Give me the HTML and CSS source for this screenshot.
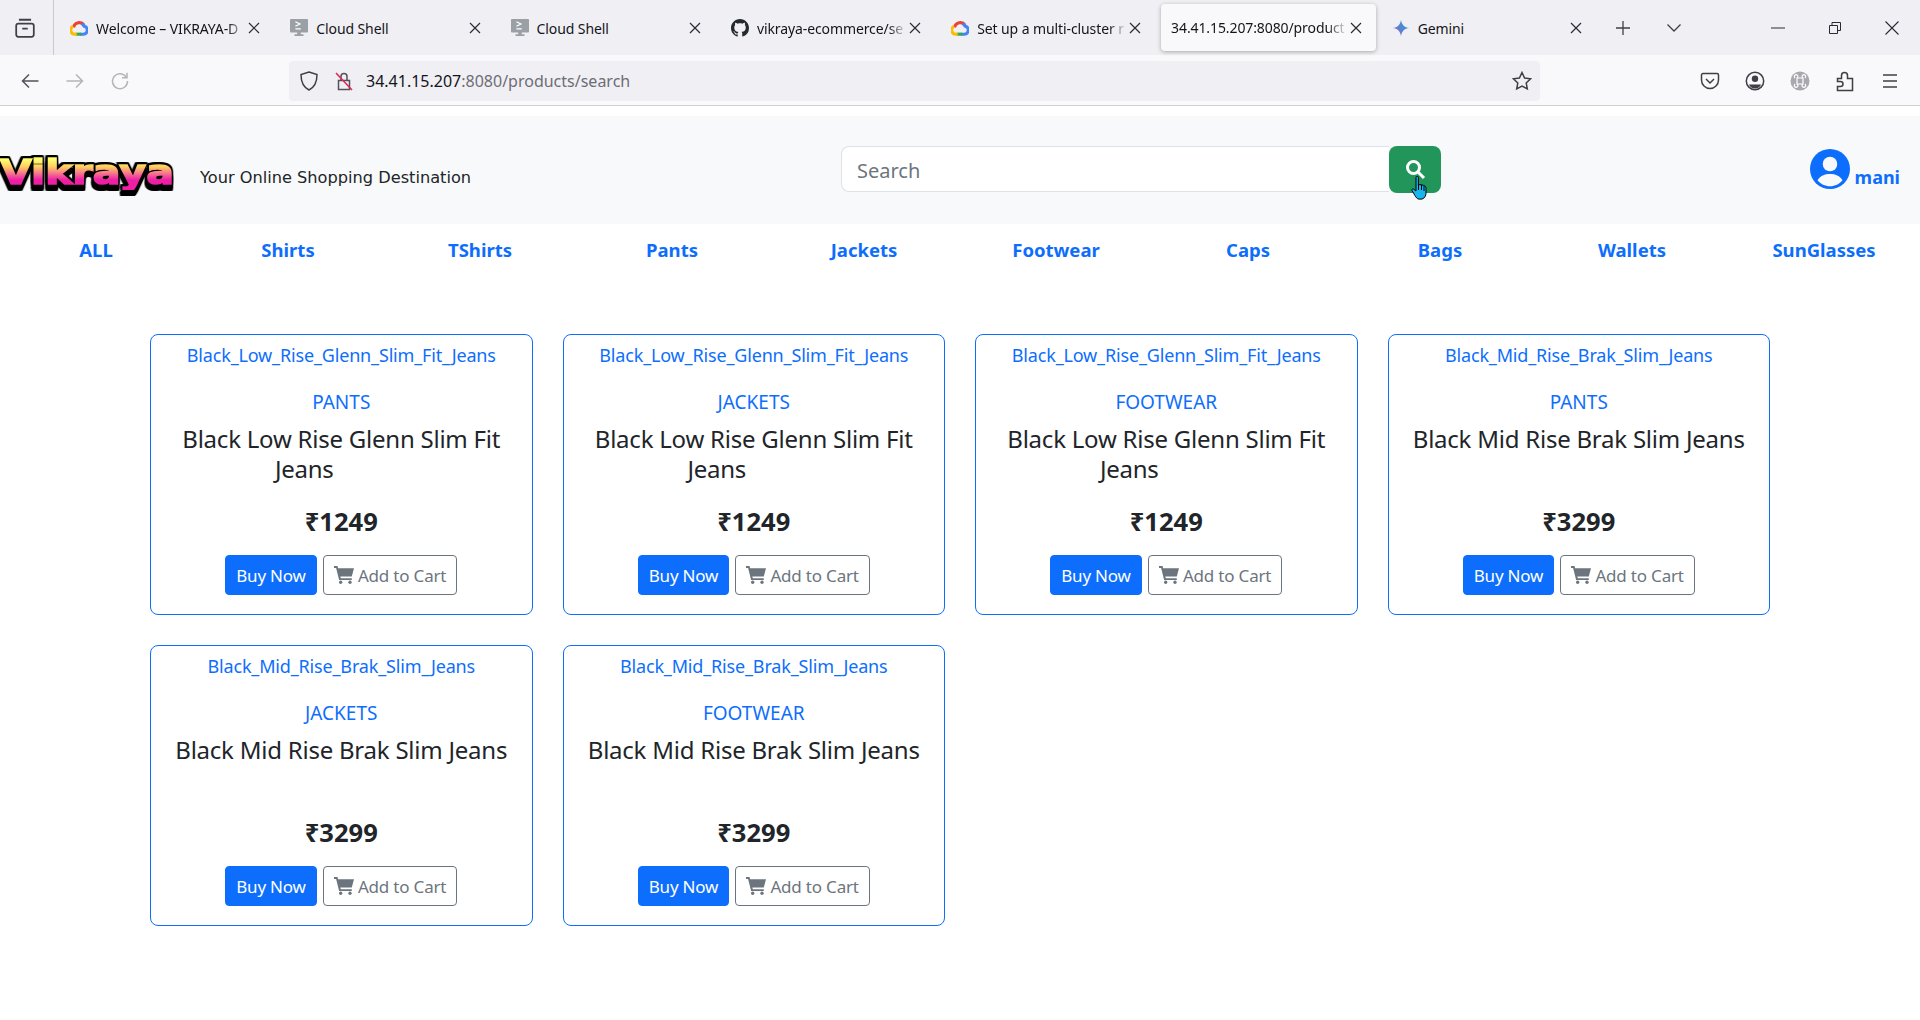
FILE: index.html
```html
<!DOCTYPE html>
<html lang="en">
<head>
  <meta charset="UTF-8" />
  <meta name="viewport" content="width=device-width, initial-scale=1" />
  <title>Vikraya</title>
  <link rel="stylesheet" href="styles.css">
</head>
<body>
  <svg class="defs" width="0" height="0">
    <symbol id="i-gcp" viewBox="1.500 1.500 21 21">
      <g fill="none" stroke-width="3.6">
        <path stroke="#ea4335" d="M5.6 11.2A7 7 0 0 1 18 8.6"/>
        <path stroke="#4285f4" d="M15.4 6.8l2.8 3.2A4.7 4.7 0 0 1 17.4 19.2H13"/>
        <path stroke="#34a853" d="M14.5 19.2H8"/>
        <path stroke="#fbbc05" d="M9.5 19.2H7.2A4.7 4.7 0 0 1 5.2 10.2"/>
      </g>
    </symbol>
    <symbol id="i-shell" viewBox="0 0 20 20">
      <path fill="#9aa0a6" d="M1 0h18a1 1 0 0 1 1 1v13a1 1 0 0 1-1 1h-7v2h3v2H5v-2h3v-2H1a1 1 0 0 1-1-1V1a1 1 0 0 1 1-1z"/>
      <path fill="none" stroke="#fff" stroke-width="1.4" d="M6 3l5 2.6L6 8M6 11h6"/>
    </symbol>
    <symbol id="i-github" viewBox="0 0 16 16">
      <path fill="#24292f" d="M8 0C3.58 0 0 3.58 0 8c0 3.54 2.29 6.53 5.47 7.59.4.07.55-.17.55-.38 0-.19-.01-.82-.01-1.49-2.01.37-2.53-.49-2.69-.94-.09-.23-.48-.94-.82-1.13-.28-.15-.68-.52-.01-.53.63-.01 1.08.58 1.23.82.72 1.21 1.87.87 2.33.66.07-.52.28-.87.51-1.07-1.78-.2-3.64-.89-3.64-3.95 0-.87.31-1.59.82-2.15-.08-.2-.36-1.02.08-2.12 0 0 .67-.21 2.2.82.64-.18 1.32-.27 2-.27s1.36.09 2 .27c1.53-1.04 2.2-.82 2.2-.82.44 1.1.16 1.92.08 2.12.51.56.82 1.27.82 2.15 0 3.07-1.87 3.75-3.65 3.95.29.25.54.73.54 1.48 0 1.07-.01 1.93-.01 2.2 0 .21.15.46.55.38A8.013 8.013 0 0 0 16 8c0-4.42-3.58-8-8-8z"/>
    </symbol>
    <linearGradient id="gemini-grad" x1="0" y1="1" x2="1" y2="0">
      <stop offset="0" stop-color="#9168c0"/>
      <stop offset="0.5" stop-color="#5684d1"/>
      <stop offset="1" stop-color="#1ba1e3"/>
    </linearGradient>
    <symbol id="i-gemini" viewBox="0 0 24 24">
      <path fill="url(#gemini-grad)" d="M12 1C12.8 7.5 16.5 11.2 23 12 16.5 12.8 12.8 16.5 12 23 11.2 16.5 7.5 12.8 1 12 7.5 11.2 11.2 7.5 12 1z"/>
    </symbol>
    <symbol id="i-close" viewBox="0 0 12 12">
      <path fill="none" stroke="#2b2a33" stroke-width="1.2" d="M1 1l10 10M11 1L1 11"/>
    </symbol>
    <symbol id="i-cart" viewBox="0 0 18 16">
      <path fill="currentColor" d="M0 0h3.2l.5 2H18l-2 7.4H5.7l.4 1.6H16v1.6H4.6L1.9 1.6H0z"/>
      <circle fill="currentColor" cx="6" cy="14.5" r="1.5"/>
      <circle fill="currentColor" cx="14.4" cy="14.5" r="1.5"/>
    </symbol>
  </svg>

  <div class="tabbar">
    <div class="view-btn">
      <svg width="22" height="22" viewBox="0 0 20 20" fill="none" stroke="#3f3f46" stroke-width="1.6"><path d="M2 8a2 2 0 0 1 2-2h12a2 2 0 0 1 2 2v8a2 2 0 0 1-2 2H4a2 2 0 0 1-2-2zM4.500 2.500h11M7.500 10.500h5"/></svg>
    </div>
    <div class="tab">
      <svg class="tab-icon"><use href="#i-gcp"/></svg>
      <span class="tab-title tab-title-fade">Welcome – VIKRAYA-D</span>
      <svg class="tab-close"><use href="#i-close"/></svg>
    </div>
    <div class="tab">
      <svg class="tab-icon"><use href="#i-shell"/></svg>
      <span class="tab-title">Cloud Shell</span>
      <svg class="tab-close"><use href="#i-close"/></svg>
    </div>
    <div class="tab">
      <svg class="tab-icon"><use href="#i-shell"/></svg>
      <span class="tab-title">Cloud Shell</span>
      <svg class="tab-close"><use href="#i-close"/></svg>
    </div>
    <div class="tab">
      <svg class="tab-icon"><use href="#i-github"/></svg>
      <span class="tab-title tab-title-fade">vikraya-ecommerce/se</span>
      <svg class="tab-close"><use href="#i-close"/></svg>
    </div>
    <div class="tab">
      <svg class="tab-icon"><use href="#i-gcp"/></svg>
      <span class="tab-title tab-title-fade">Set up a multi-cluster r</span>
      <svg class="tab-close"><use href="#i-close"/></svg>
    </div>
    <div class="tab tab-active">
      <span class="tab-title tab-title-fade">34.41.15.207:8080/product</span>
      <svg class="tab-close"><use href="#i-close"/></svg>
    </div>
    <div class="tab">
      <svg class="tab-icon"><use href="#i-gemini"/></svg>
      <span class="tab-title">Gemini</span>
      <svg class="tab-close"><use href="#i-close"/></svg>
    </div>
    <div class="tab-new">
      <svg width="16" height="16" viewBox="0 0 16 16" fill="none" stroke="#3f3f46" stroke-width="1.3"><path d="M8 1v14M1 8h14"/></svg>
    </div>
    <div class="tab-list">
      <svg width="16" height="16" viewBox="0 0 16 16" fill="none" stroke="#3f3f46" stroke-width="1.3"><path d="M1.500 4.500L8 11l6.500-6.500"/></svg>
    </div>
    <div class="win-controls">
      <div class="win-btn"><svg width="14" height="12" viewBox="0 0 14 12" stroke="#2b2a33"><path d="M0 6h14"/></svg></div>
      <div class="win-btn"><svg width="12" height="12" viewBox="0 0 12 12" fill="none" stroke="#2b2a33"><path d="M.5 3.500h8v8h-8zM3 3.500V.5h8.500v8H8.500"/></svg></div>
      <div class="win-btn"><svg width="14" height="14" viewBox="0 0 14 14" fill="none" stroke="#2b2a33" stroke-width="1.1"><path d="M.5.5l13 13M13.500.5l-13 13"/></svg></div>
    </div>
  </div>

  <div class="toolbar">
    <div class="nav-btn"><svg width="18" height="16" viewBox="0 0 18 16" fill="none" stroke="#52525e" stroke-width="1.5"><path d="M17.500 8H1.500M8 1.500L1.500 8 8 14.500"/></svg></div>
    <div class="nav-btn"><svg width="18" height="16" viewBox="0 0 18 16" fill="none" stroke="#b4b4ba" stroke-width="1.5"><path d="M.5 8h16M10 1.500L16.500 8 10 14.500"/></svg></div>
    <div class="nav-btn"><svg width="18" height="18" viewBox="0 0 18 18" fill="none" stroke="#b4b4ba" stroke-width="1.5"><path d="M15.500 5.500A7.500 7.500 0 1 0 16.500 9M16 .8v5h-5"/></svg></div>
    <div class="urlbar">
      <svg class="url-icon" width="18" height="20" viewBox="0 0 18 20" fill="none" stroke="#3f3f46" stroke-width="1.5"><path d="M9 1l8 2.500c0 8-2 12.500-8 15.500C3 16 1 11.500 1 3.500z"/></svg>
      <svg class="url-icon" width="18" height="20" viewBox="0 0 18 20" fill="none"><path stroke="#52525e" stroke-width="1.5" d="M3.500 9.500h11v9h-11zM6 9.500V5.500a3 3 0 0 1 6 0v4"/><path stroke="#e22850" stroke-width="1.6" d="M1 2l16 17"/></svg>
      <span class="url-text"><span class="url-host">34.41.15.207</span>:8080/products/search</span>
      <svg class="url-star" width="20" height="20" viewBox="0 0 20 20" fill="none" stroke="#3f3f46" stroke-width="1.5"><path d="M10 1.500l2.600 5.500 6 .8-4.400 4.100 1.100 6L10 15l-5.300 2.900 1.100-6L1.400 7.800l6-.8z"/></svg>
    </div>
    <div class="tool-icons">
      <div class="tool-btn"><svg width="20" height="20" viewBox="0 0 20 20" fill="none" stroke="#3f3f46" stroke-width="1.5"><path d="M3 2.500h14a1.500 1.500 0 0 1 1.500 1.500v5a8.500 8.500 0 0 1-17 0V4A1.500 1.500 0 0 1 3 2.500zM6 8l4 4 4-4"/></svg></div>
      <div class="tool-btn"><svg width="20" height="20" viewBox="0 0 20 20"><circle cx="10" cy="10" r="8.700" fill="none" stroke="#3f3f46" stroke-width="1.500"/><circle cx="10" cy="7.800" r="3.200" fill="#3f3f46"/><path fill="#3f3f46" d="M4 13.500h12c-1 2.500-3.300 4-6 4s-5-1.500-6-4z"/></svg></div>
      <div class="tool-btn"><svg width="20" height="20" viewBox="0 0 20 20"><circle cx="10" cy="10" r="9.500" fill="#a8a8ae"/><path fill="none" stroke="#fff" stroke-width="1.200" d="M7 7h6v6H7zM7 7a1.800 1.800 0 1 0-1.800 0M13 7a1.800 1.800 0 1 1 1.800 0M7 13a1.800 1.800 0 1 1-1.800 0M13 13a1.800 1.800 0 1 0 1.800 0"/></svg></div>
      <div class="tool-btn"><svg width="20" height="22" viewBox="0 0 20 22" fill="none" stroke="#3f3f46" stroke-width="1.500"><path d="M2 9h4V6a3 3 0 0 1 6 0v3h5v12H2v-4h3a2 2 0 0 0 0-5H2z" transform="translate(.5 -.5)"/></svg></div>
      <div class="tool-btn"><svg width="18" height="16" viewBox="0 0 18 16" stroke="#3f3f46" stroke-width="1.500"><path d="M2 2h14M2 8h14M2 14h14"/></svg></div>
    </div>
  </div>

  <div class="page">
    <header class="site-header">
      <div class="brand">
        <div class="logo-box"><span class="logo">Vikraya</span></div>
        <span class="tagline">Your Online Shopping Destination</span>
      </div>
      <form class="search">
        <input class="search-input" type="text" placeholder="Search" />
        <button class="search-btn" type="button">
          <svg width="22" height="22" viewBox="0 0 22 22" fill="none" stroke="#fff"><circle cx="9.500" cy="9.500" r="6" stroke-width="3"/><path stroke-width="3" d="M14 14l6 6"/></svg>
          <svg class="cursor" width="18" height="24" viewBox="0 0 18 24"><path fill="#19b5ee" stroke="#000" stroke-width="1" d="M5 1.500a1.200 1.200 0 0 1 2.400 0V9l1.500-.4 1.700.2 1.700.5 1.700.8c1 .5 1 2 1 3v4c0 2-1 5-4 6H8c-2 0-3-2-4-3.500L1 14.500c-.5-1 .5-2 1.500-1.500L5 15z"/><path stroke="#000" d="M7.500 9v5M10.500 9v5M13 10v5"/></svg>
        </button>
      </form>
      <a class="user" href="#">
        <svg class="user-icon" viewBox="0 0 16 16"><circle cx="8" cy="8" r="8" fill="#0d6efd"/><circle cx="8" cy="6" r="2.900" fill="#f8f9fa"/><path fill="#f8f9fa" d="M3 12.500C4 10.700 6 10 8 10s4 .7 5 2.500c-1.200 1.500-3 2.400-5 2.400s-3.800-.9-5-2.400z"/></svg>
        <span>mani</span>
      </a>
    </header>

    <nav class="cat-nav">
      <a href="#">ALL</a>
      <a href="#">Shirts</a>
      <a href="#">TShirts</a>
      <a href="#">Pants</a>
      <a href="#">Jackets</a>
      <a href="#">Footwear</a>
      <a href="#">Caps</a>
      <a href="#">Bags</a>
      <a href="#">Wallets</a>
      <a href="#">SunGlasses</a>
    </nav>

    <main class="product-grid">
      <div class="product-card">
        <a class="product-link" href="#">Black_Low_Rise_Glenn_Slim_Fit_Jeans</a>
        <a class="product-cat" href="#">PANTS</a>
        <h4 class="product-name">Black Low Rise Glenn Slim Fit <span class="name-tail">Jeans</span></h4>
        <h4 class="product-price">₹1249</h4>
        <div class="product-actions">
          <a class="btn btn-buy" href="#">Buy Now</a>
          <a class="btn btn-cart" href="#"><svg class="cart-icon"><use href="#i-cart"/></svg> Add to Cart</a>
        </div>
      </div>
      <div class="product-card">
        <a class="product-link" href="#">Black_Low_Rise_Glenn_Slim_Fit_Jeans</a>
        <a class="product-cat" href="#">JACKETS</a>
        <h4 class="product-name">Black Low Rise Glenn Slim Fit <span class="name-tail">Jeans</span></h4>
        <h4 class="product-price">₹1249</h4>
        <div class="product-actions">
          <a class="btn btn-buy" href="#">Buy Now</a>
          <a class="btn btn-cart" href="#"><svg class="cart-icon"><use href="#i-cart"/></svg> Add to Cart</a>
        </div>
      </div>
      <div class="product-card">
        <a class="product-link" href="#">Black_Low_Rise_Glenn_Slim_Fit_Jeans</a>
        <a class="product-cat" href="#">FOOTWEAR</a>
        <h4 class="product-name">Black Low Rise Glenn Slim Fit <span class="name-tail">Jeans</span></h4>
        <h4 class="product-price">₹1249</h4>
        <div class="product-actions">
          <a class="btn btn-buy" href="#">Buy Now</a>
          <a class="btn btn-cart" href="#"><svg class="cart-icon"><use href="#i-cart"/></svg> Add to Cart</a>
        </div>
      </div>
      <div class="product-card">
        <a class="product-link" href="#">Black_Mid_Rise_Brak_Slim_Jeans</a>
        <a class="product-cat" href="#">PANTS</a>
        <h4 class="product-name">Black Mid Rise Brak Slim Jeans</h4>
        <h4 class="product-price">₹3299</h4>
        <div class="product-actions">
          <a class="btn btn-buy" href="#">Buy Now</a>
          <a class="btn btn-cart" href="#"><svg class="cart-icon"><use href="#i-cart"/></svg> Add to Cart</a>
        </div>
      </div>
      <div class="product-card">
        <a class="product-link" href="#">Black_Mid_Rise_Brak_Slim_Jeans</a>
        <a class="product-cat" href="#">JACKETS</a>
        <h4 class="product-name">Black Mid Rise Brak Slim Jeans</h4>
        <h4 class="product-price">₹3299</h4>
        <div class="product-actions">
          <a class="btn btn-buy" href="#">Buy Now</a>
          <a class="btn btn-cart" href="#"><svg class="cart-icon"><use href="#i-cart"/></svg> Add to Cart</a>
        </div>
      </div>
      <div class="product-card">
        <a class="product-link" href="#">Black_Mid_Rise_Brak_Slim_Jeans</a>
        <a class="product-cat" href="#">FOOTWEAR</a>
        <h4 class="product-name">Black Mid Rise Brak Slim Jeans</h4>
        <h4 class="product-price">₹3299</h4>
        <div class="product-actions">
          <a class="btn btn-buy" href="#">Buy Now</a>
          <a class="btn btn-cart" href="#"><svg class="cart-icon"><use href="#i-cart"/></svg> Add to Cart</a>
        </div>
      </div>
    </main>
  </div>
</body>
</html>
```

FILE: styles.css
```css
* { box-sizing: border-box; }
html, body { height: 100%; }
body {
  margin: 0;
  overflow: hidden;
  background: #fff;
  color: #212529;
  font-family: "Noto Sans", "Open Sans", sans-serif;
}
a { text-decoration: none; }
.defs { position: absolute; }

/* browser chrome */
.tabbar {
  display: flex;
  align-items: center;
  height: 55px;
  padding-top: 1px;
  background: #f0f0f4;
  color: #15141a;
}
.view-btn {
  display: flex;
  align-items: center;
  justify-content: center;
  width: 54px;
  height: 55px;
  margin-top: -1px;
  margin-right: 5px;
  padding-right: 4px;
  border-right: 1px solid #c9c9cf;
}
.tab {
  display: flex;
  align-items: center;
  flex: none;
  width: 220.3px;
  height: 47px;
  padding: 0 19px 0 11px;
  font-size: 14px;
}
.tab-active {
  width: 215px;
  margin: -1px 4.600px 0 0.6px;
  padding: 0 14px 0 10px;
  background: #f9f9fb;
  border-radius: 4px;
  box-shadow: 0 1px 4px rgba(0, 0, 0, 0.3);
}
.tab-icon { flex: none; width: 18px; height: 18px; margin-right: 8px; }
.tab-title {
  flex: 1;
  min-width: 0;
  overflow: hidden;
  white-space: nowrap;
  letter-spacing: -0.1px;
}
.tab-title-fade {
  -webkit-mask-image: linear-gradient(to right, #000 88%, transparent);
  mask-image: linear-gradient(to right, #000 88%, transparent);
}
.tab-close { flex: none; width: 12px; height: 12px; margin-left: 2px; }
.tab-new, .tab-list { display: flex; align-items: center; justify-content: center; height: 55px; margin-top: -1px; }
.tab-new { width: 45px; }
.tab-list { width: 56px; }
.win-controls { display: flex; margin-top: -1px; margin-left: auto; }
.win-btn { display: flex; align-items: center; justify-content: center; width: 57px; height: 55px; }

.toolbar {
  display: flex;
  align-items: center;
  height: 51px;
  padding-left: 7.5px;
  padding-top: 1px;
  background: #f9f9fb;
  border-bottom: 1px solid #cfcfd8;
}
.nav-btn, .tool-btn { display: flex; align-items: center; justify-content: center; width: 45px; height: 40px; }
.urlbar {
  display: flex;
  align-items: center;
  width: 1251px;
  height: 40px;
  margin-left: 146.500px;
  padding: 0 8px 0 11px;
  background: #f0f0f4;
  border-radius: 4px;
}
.url-icon { margin-right: 17px; }
.url-text { flex: 1; margin-left: -4px; padding-top: 1px; color: #6d6d76; font-size: 16px; }
.url-host { color: #15141a; }
.tool-icons { display: flex; margin-left: auto; padding-right: 7.500px; }

/* site */
.page { padding-top: 10px; }
.site-header {
  display: flex;
  align-items: center;
  height: 108px;
  background: #f8f9fa;
}
.brand { display: flex; align-items: center; width: 841px; }
.logo-box { width: 174px; height: 38px; margin-top: 6px; }
.logo {
  display: block;
  width: 146px;
  font-family: "DejaVu Sans", sans-serif;
  font-size: 34px;
  font-weight: 700;
  line-height: 36px;
  background: linear-gradient(#ffff70 15%, #ffd060 35%, #f57090 55%, #ee1fa5 72%);
  -webkit-background-clip: text;
  background-clip: text;
  color: transparent;
  -webkit-text-stroke: 1.600px transparent;
  transform: scaleX(1.21);
  transform-origin: left;
  filter: drop-shadow(1.500px 0 0 #000) drop-shadow(-1.500px 0 0 #000) drop-shadow(0 -1.500px 0 #000) drop-shadow(0 6px 0 #000);
}
.tagline {
  margin-left: 26px;
  margin-top: 14px;
  font-family: "DejaVu Sans", sans-serif;
  font-size: 16.200px;
  white-space: nowrap;
}
.search { display: flex; margin-top: -2px; }
.search-input {
  width: 548px;
  height: 46px;
  padding: 4px 15px 0;
  border: 1px solid #dee2e6;
  border-right: 0;
  border-radius: 8px 0 0 8px;
  background: #fff;
  font: 20px "Noto Sans", sans-serif;
  outline: 0;
}
.search-input::placeholder { color: #6c757d; opacity: 1; }
.search-btn {
  position: relative;
  display: flex;
  align-items: center;
  justify-content: center;
  width: 52px;
  height: 47px;
  padding: 0;
  border: 0;
  border-radius: 8px;
  background: #22965a;
}
/* mouse pointer caught in the screenshot */
.cursor { position: absolute; left: 22px; top: 30px; }
.user {
  display: flex;
  align-items: flex-end;
  margin-left: auto;
  margin-right: 20px;
  margin-top: -2px;
  color: #0d6efd;
  font-size: 18px;
  font-weight: 700;
  line-height: 24px;
}
.user-icon { width: 40px; height: 40px; margin-right: 5px; }

.cat-nav {
  display: grid;
  grid-template-columns: repeat(10, 1fr);
  height: 50px;
  align-items: center;
  text-align: center;
  font-size: 18.500px;
  font-weight: 700;
}
.cat-nav a { color: #0d6efd; }

.product-grid {
  display: grid;
  grid-template-columns: repeat(4, 382.500px);
  gap: 30px;
  width: 1620px;
  margin: 60px auto 0;
}
.product-card {
  display: flex;
  flex-direction: column;
  align-items: center;
  height: 281px;
  padding: 8px 12px 0;
  border: 1px solid #0d6efd;
  border-radius: 8px;
  text-align: center;
}
.product-link, .product-cat {
  display: block;
  color: #0d6efd;
  font-size: 18px;
  line-height: 24px;
  letter-spacing: -0.160px;
}
.product-cat { margin-top: 23px; font-size: 19px; letter-spacing: 0; }
.product-name {
  width: 100%;
  height: 59px;
  margin: 10px 0 0;
  font-size: 24px;
  font-weight: 400;
  line-height: 30px;
  letter-spacing: -0.230px;
}
.name-tail { padding-right: 74px; }
.product-price {
  margin: 23px 0 0;
  font-size: 25.500px;
  font-weight: 700;
  line-height: 30px;
}
.product-actions { display: flex; gap: 6px; margin-top: 19px; }
.btn {
  display: flex;
  align-items: center;
  height: 40px;
  padding: 0 10px;
  border: 1px solid #6c757d;
  border-radius: 4px;
  font-size: 17px;
  letter-spacing: -0.200px;
  white-space: pre;
}
.btn-buy { background: #0d6efd; border-color: #0d6efd; color: #fff; }
.btn-cart { color: #6c757d; }
.cart-icon { width: 20px; height: 18px; }
```
